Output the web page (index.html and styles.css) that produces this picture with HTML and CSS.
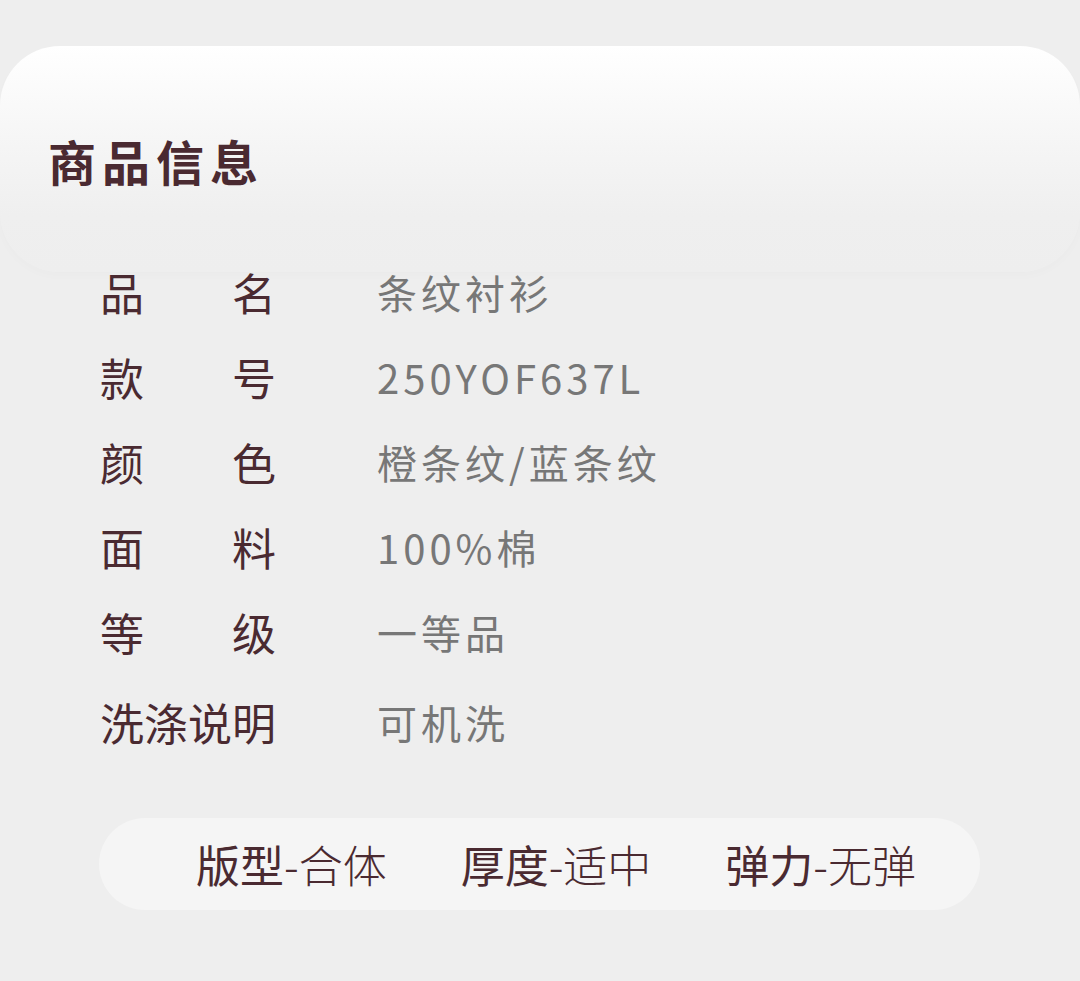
FILE: index.html
```html
<!DOCTYPE html>
<html lang="zh-CN">
<head>
  <meta charset="UTF-8" />
  <meta name="viewport" content="width=device-width, initial-scale=1.0" />
  <title>商品信息</title>
  <link rel="stylesheet" href="styles.css">
</head>
<body>
  <div class="page">
    <div class="info-head">
      <h2>商品信息</h2>
    </div>

    <div class="spec-list">
      <div class="spec-row">
        <span class="spec-label">品名</span>
        <span class="spec-value">条纹衬衫</span>
      </div>
      <div class="spec-row">
        <span class="spec-label">款号</span>
        <span class="spec-value">250YOF637L</span>
      </div>
      <div class="spec-row">
        <span class="spec-label">颜色</span>
        <span class="spec-value">橙条纹/蓝条纹</span>
      </div>
      <div class="spec-row">
        <span class="spec-label">面料</span>
        <span class="spec-value">100%棉</span>
      </div>
      <div class="spec-row">
        <span class="spec-label">等级</span>
        <span class="spec-value">一等品</span>
      </div>
      <div class="spec-row last">
        <span class="spec-label">洗涤说明</span>
        <span class="spec-value">可机洗</span>
      </div>
    </div>

    <div class="fit-bar">
      <div class="fit-item"><b>版型</b>-合体</div>
      <div class="fit-item"><b>厚度</b>-适中</div>
      <div class="fit-item"><b>弹力</b>-无弹</div>
    </div>
  </div>
</body>
</html>
```

FILE: styles.css
```css
body {
  margin: 0;
  font-family: 'Noto Sans CJK SC', 'Noto Sans', sans-serif;
  background-color: #eeeeee;
  color: #4a2a31;
}

.page {
  padding-top: 46px;
  height: 935px;
}

.info-head {
  height: 226px;
  box-sizing: border-box;
  padding: 90px 0 0 48px;
  border-radius: 60px;
  background: linear-gradient(180deg, #ffffff 0%, #f6f6f6 40%, #efefef 75%, #eeeeee 100%);
  box-shadow: 0 4px 10px rgba(0, 0, 0, 0.015);
}

.info-head h2 {
  margin: 0;
  font-size: 48px;
  line-height: 48px;
  font-weight: 700;
  letter-spacing: 6px;
}

.spec-list {
  display: flex;
  flex-direction: column;
  gap: 41px;
  padding-left: 100px;
  margin-top: -2px;
}

.spec-row {
  display: flex;
  align-items: center;
  height: 44px;
}

.spec-row.last {
  margin-top: 5px;
}

.spec-label {
  width: 176px;
  font-size: 44px;
  line-height: 44px;
  text-align: justify;
  text-align-last: justify;
}

.spec-value {
  margin-left: 101px;
  font-size: 40px;
  line-height: 44px;
  letter-spacing: 4px;
  color: #777777;
}

.fit-bar {
  display: flex;
  align-items: center;
  gap: 74px;
  margin: 74px 100px 0 99px;
  height: 92px;
  padding-left: 97px;
  border-radius: 46px;
  background: #f5f5f5;
}

.fit-item {
  font-size: 44px;
  line-height: 44px;
  font-weight: 300;
}

.fit-item b {
  font-weight: 400;
}
```
